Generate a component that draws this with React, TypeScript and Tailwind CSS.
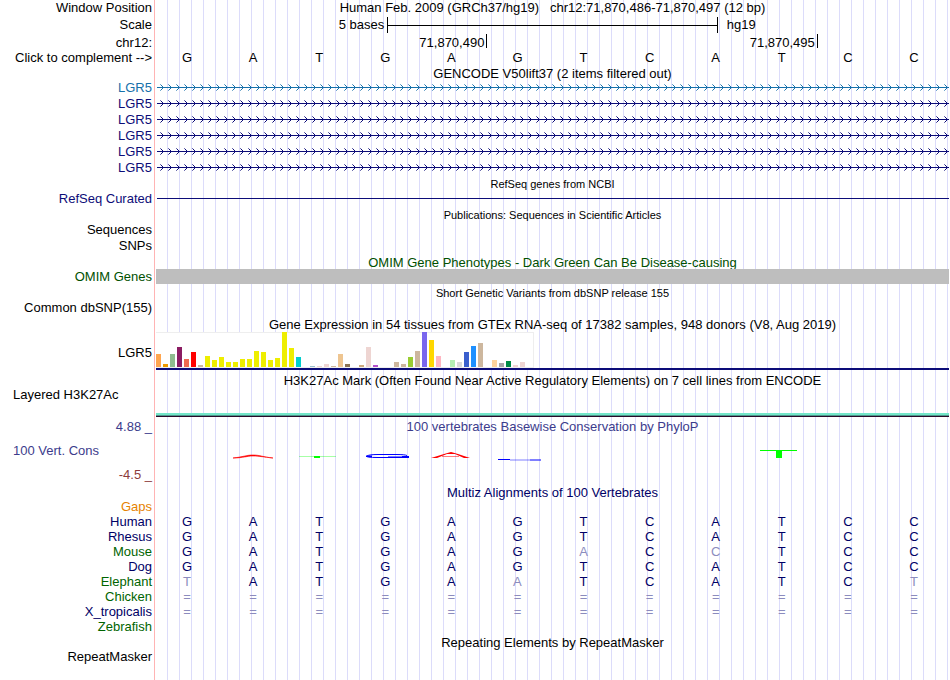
import type { ReactNode } from "react";

const LABEL = "w-[154px] shrink-0 whitespace-nowrap pr-[2px] text-right";
const GRID =
  "bg-[linear-gradient(to_right,transparent_11px,#dcdcfa_11px)] bg-[length:12px_100%]";

const NAVY = "text-[#0c0c78]";
const DEEP = "text-[#000066]";
const GREEN = "text-[#006400]";

const transcripts = [
  { id: 1, text: "text-[#1670aa]", arrow: "#1670aa" },
  { id: 2, text: NAVY, arrow: "#0c0c78" },
  { id: 3, text: NAVY, arrow: "#0c0c78" },
  { id: 4, text: NAVY, arrow: "#0c0c78" },
  { id: 5, text: NAVY, arrow: "#0c0c78" },
  { id: 6, text: NAVY, arrow: "#0c0c78" },
];

// one entry per tissue: bar height and fill
const tissues: [number, string][] = [
  [13, "#ffa54f"], [3, "#ee9a00"], [13, "#8fbc8f"], [20, "#8b1c62"], [8, "#ee6a50"], [15, "#ff0000"],
  [2, "#cdb79e"], [11, "#eeee00"], [7, "#eeee00"], [10, "#eeee00"], [5, "#eeee00"], [5, "#eeee00"],
  [8, "#eeee00"], [8, "#eeee00"], [16, "#eeee00"], [15, "#eeee00"], [7, "#eeee00"], [9, "#eeee00"],
  [35, "#eeee00"], [19, "#eeee00"], [10, "#00cdcd"], [0, "#ee82ee"], [1, "#9ac0cd"], [1, "#eed5d2"],
  [3, "#eed5d2"], [1, "#cdb79e"], [13, "#eec591"], [3, "#8b7355"], [0, "#8b7355"], [2, "#cdaa7d"],
  [20, "#eed5d2"], [2, "#b452cd"], [0, "#7a378b"], [0, "#cdb79e"], [5, "#cdb79e"], [3, "#cdb79e"],
  [10, "#9acd32"], [16, "#cdb79e"], [35, "#7a67ee"], [27, "#ffd700"], [11, "#ffb6c1"], [0, "#cd9b1d"],
  [7, "#b4eeb4"], [5, "#d9d9d9"], [15, "#3a5fcd"], [21, "#1e90ff"], [24, "#cdb79e"], [0, "#cdb79e"],
  [7, "#ffd39b"], [4, "#a6a6a6"], [6, "#008b45"], [2, "#eed5d2"], [5, "#eed5d2"], [0, "#ff00ff"],
];

// lower case marks a base that differs from human
const species = [
  { name: "Human", color: DEEP, bases: "GATGAGTCATCC" },
  { name: "Rhesus", color: DEEP, bases: "GATGAGTCATCC" },
  { name: "Mouse", color: GREEN, bases: "GATGAGaCcTCC" },
  { name: "Dog", color: DEEP, bases: "GATGAGTCATCC" },
  { name: "Elephant", color: GREEN, bases: "tATGAaTCATCt" },
  { name: "Chicken", color: GREEN, bases: "============" },
  { name: "X_tropicalis", color: DEEP, bases: "============" },
  { name: "Zebrafish", color: GREEN, bases: "" },
];

function Row({
  label,
  height = "h-4 leading-4",
  color = "",
  children,
}: {
  label?: ReactNode;
  height?: string;
  color?: string;
  children?: ReactNode;
}) {
  return (
    <div className={`flex ${height}`}>
      <div className={`${LABEL} ${color}`}>{label}</div>
      <div className="ml-[2px] min-w-0 flex-1">{children}</div>
    </div>
  );
}

function Title({
  children,
  height = "h-[15px] leading-[17px]",
  color = "",
}: {
  children: ReactNode;
  height?: string;
  color?: string;
}) {
  return (
    <Row height={height}>
      <h2 className={`text-center whitespace-pre ${color}`}>{children}</h2>
    </Row>
  );
}

function Bases({ bases, color = "" }: { bases: string; color?: string }) {
  return (
    <div className={`grid grid-cols-12 text-center ${color}`}>
      {bases.split("").map((base, i) => (
        <span key={i} className={/[a-z=]/.test(base) ? "pr-1 text-[#8c8cbe]" : "pr-1"}>
          {base.toUpperCase()}
        </span>
      ))}
    </div>
  );
}

function Arrows({ id, color }: { id: string; color: string }) {
  return (
    <svg className="block h-4 w-full" shapeRendering="crispEdges">
      <defs>
        <pattern id={id} x="2" width="8" height="16" patternUnits="userSpaceOnUse">
          <rect y="7" width="8" height="1" fill={color} />
          <path d="M4 6h1v1h-1zM4 8h1v1h-1zM3 5h1v1h-1zM3 9h1v1h-1z" fill={color} />
          <path d="M2 4h1v1h-1zM2 10h1v1h-1z" fill={color} opacity="0.6" />
        </pattern>
      </defs>
      <rect x="1" width="100%" height="16" fill={`url(#${id})`} />
    </svg>
  );
}

function Expression() {
  return (
    <div className="h-[38px] border-b-2 border-[#0c0c78]">
      <div className="flex h-9 w-[378px] items-end gap-[2px] border-t border-r border-b border-[#eeeeee] bg-white">
        {tissues.map(([height, fill], i) => (
          <div key={i} className="w-[5px] shrink-0" style={{ height, backgroundColor: fill }} />
        ))}
      </div>
    </div>
  );
}

// letter stacks of the conservation logo, 66 units per base
function Conservation() {
  return (
    <svg className="block h-7 w-full" viewBox="0 3 793 28" preserveAspectRatio="none">
      <path d="M77 24C87 23 90 21 97 21S107 23 117 24C107 23 103 22 97 22S87 24 77 24Z" fill="#f00" stroke="#f00" strokeWidth="0.6" />
      <path d="M143 22.5H180" stroke="#0f0" strokeOpacity="0.35" />
      <rect x="158" y="22" width="6" height="2" fill="#0f0" />
      <path d="M251 21.5Q249 20.5 240 20.5H222Q213 20.5 211 22T222 23.5H252" fill="none" stroke="#00f" />
      <path d="M210 21.5H216V23H210ZM246 22H253V24H246Z" fill="#00f" />
      <path d="M232 22.5H246" stroke="#00f" strokeOpacity="0.5" />
      <path d="M275 24L288 20L295 18L302 20L314 24H308L299 20H291L281 24Z" fill="#f00" />
      <path d="M286 22.5H303" stroke="#f00" strokeOpacity="0.5" />
      <path d="M342 25.5H354M374 26H385" stroke="#00f" />
      <path d="M354 26H374" stroke="#00f" strokeOpacity="0.5" />
      <rect x="604" y="16" width="37" height="1" fill="#0f0" />
      <rect x="620" y="16" width="6" height="8" fill="#0f0" />
    </svg>
  );
}

export default function App() {
  return (
    <main className="relative flex min-h-screen bg-white pr-px font-['Liberation_Sans',Arial,sans-serif] text-[13px] text-black">
      <div className="absolute inset-y-0 right-px left-0 flex" aria-hidden="true">
        <div className="w-[155px] shrink-0 border-r border-[#ffb4b4]" />
        <div className={`ml-px flex-1 ${GRID}`} />
      </div>

      <div className="relative min-w-0 flex-1">
        <Row label="Window Position">
          <h1 className="text-center whitespace-pre">
            {"Human Feb. 2009 (GRCh37/hg19)   chr12:71,870,486-71,870,497 (12 bp)"}
          </h1>
        </Row>
        <Row label="Scale" height="h-[18px] leading-[18px]">
          <div className="grid grid-cols-24 items-center">
            <span className="col-span-7 pr-[3px] text-right">5 bases</span>
            <div className="col-span-10 flex h-4 items-center border-x border-black">
              <div className="h-px w-full bg-black" />
            </div>
            <span className="col-span-7 pl-[9px]">hg19</span>
          </div>
        </Row>
        <Row label="chr12:" height="h-4 leading-[18px]">
          <div className="grid grid-cols-12 items-start">
            <span className="col-span-5 pr-[2px] text-right">71,870,490</span>
            <span className="col-span-5 flex justify-between pr-[2px]">
              <span className="h-[14px] w-px bg-black" />
              71,870,495
            </span>
            <span className="h-[14px] w-px bg-black" />
          </div>
        </Row>
        <Row
          label={<button type="button" className="cursor-pointer">Click to complement --&gt;</button>}
          height="h-[15px] leading-[15px]"
        >
          <Bases bases="GATGAGTCATCC" />
        </Row>

        <Title>GENCODE V50lift37 (2 items filtered out)</Title>
        {transcripts.map((t) => (
          <Row key={t.id} label="LGR5" color={t.text}>
            <Arrows id={`arrows-${t.id}`} color={t.arrow} />
          </Row>
        ))}

        <Title height="h-[15px] text-[11px] leading-[17px]">RefSeq genes from NCBI</Title>
        <Row label="RefSeq Curated" color={NAVY}>
          <div className="ml-px flex h-[15px] items-center">
            <div className="h-px w-full bg-[#0c0c78]" />
          </div>
        </Row>

        <Title height="h-[15px] text-[11px] leading-[17px]">
          Publications: Sequences in Scientific Articles
        </Title>
        <Row label="Sequences" />
        <Row label="SNPs" />

        <Title color="text-[#005000]">
          OMIM Gene Phenotypes - Dark Green Can Be Disease-causing
        </Title>
        <Row label="OMIM Genes" height="h-[15px] leading-[15px]" color="text-[#005000]">
          <div className="h-full bg-[#bebebe]" />
        </Row>

        <Title height="h-4 text-[11px] leading-[18px]">
          Short Genetic Variants from dbSNP release 155
        </Title>
        <Row label="Common dbSNP(155)" />

        <Title height="h-4 leading-[18px]">
          Gene Expression in 54 tissues from GTEx RNA-seq of 17382 samples, 948 donors (V8, Aug 2019)
        </Title>
        <Row label="LGR5" height="h-[38px] leading-[42px]">
          <Expression />
        </Row>

        <div className="h-[2px]" />
        <Title height="h-4 leading-[18px]">
          H3K27Ac Mark (Often Found Near Active Regulatory Elements) on 7 cell lines from ENCODE
        </Title>
        <Row
          label={<span className="block pl-[13px] text-left">Layered H3K27Ac</span>}
          height="h-[29px] leading-[13px]"
        >
          <div className="flex h-full flex-col justify-end">
            <div className="h-[2px] bg-[#73e6c8]" />
            <div className="h-px bg-[#50968c]" />
            <div className="h-px bg-[#280a28]" />
          </div>
        </Row>

        <Row label="4.88 _" height="h-5 leading-5" color="text-[#3c3c8c]">
          <h2 className="text-center text-[#3c3c8c]">
            100 vertebrates Basewise Conservation by PhyloP
          </h2>
        </Row>
        <Row
          label={<span className="block pl-[13px] text-left">100 Vert. Cons</span>}
          height="h-7 leading-7"
          color="text-[#3c3c8c]"
        >
          <Conservation />
        </Row>
        <Row label="-4.5 _" height="h-[19px] leading-5" color="text-[#8c3c3c]" />

        <Title color={DEEP}>Multiz Alignments of 100 Vertebrates</Title>
        <Row label="Gaps" height="h-[15px] leading-[15px]" color="text-[#e68200]" />
        {species.map((s) => (
          <Row key={s.name} label={s.name} height="h-[15px] leading-[15px]" color={s.color}>
            <Bases bases={s.bases} color={DEEP} />
          </Row>
        ))}

        <Title>Repeating Elements by RepeatMasker</Title>
        <Row label="RepeatMasker" height="h-[15px] leading-[15px]" />
      </div>
    </main>
  );
}
